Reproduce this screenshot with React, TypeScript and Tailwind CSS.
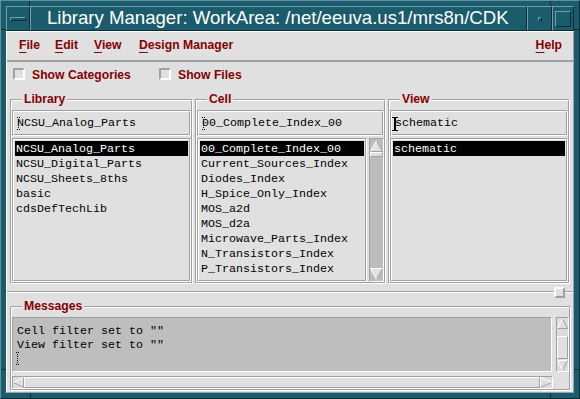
import React from "react";

const RAISED = "border-t-white border-l-white border-b-[#a0a0a0] border-r-[#a0a0a0]";
const SUNKEN = "border-t-[#a0a0a0] border-l-[#a0a0a0] border-b-white border-r-white";
const TRAISED = "border-t-[#6f9fac] border-l-[#6f9fac] border-b-[#0a2e38] border-r-[#0a2e38]";

type Dir = "up" | "down" | "left" | "right";

function Arrow({ dir, w, h }: { dir: Dir; w: number; h: number }) {
  const W = w - 0.5;
  const H = h - 0.5;
  let pts = "";
  let light = "";
  let dark = "";
  if (dir === "up") {
    pts = `${w / 2},0.5 ${W},${H} 0.5,${H}`;
    dark = `${w / 2},0.5 ${W},${H} 0.5,${H}`;
    light = `0.5,${H} ${w / 2},0.5`;
  } else if (dir === "down") {
    pts = `0.5,0.5 ${W},0.5 ${w / 2},${H}`;
    dark = `${W},0.5 ${w / 2},${H}`;
    light = `${w / 2},${H} 0.5,0.5 ${W},0.5`;
  } else if (dir === "left") {
    pts = `0.5,${h / 2} ${W},0.5 ${W},${H}`;
    dark = `${W},0.5 ${W},${H} 0.5,${h / 2}`;
    light = `0.5,${h / 2} ${W},0.5`;
  } else {
    pts = `0.5,0.5 ${W},${h / 2} 0.5,${H}`;
    dark = `${W},${h / 2} 0.5,${H}`;
    light = `0.5,${H} 0.5,0.5 ${W},${h / 2}`;
  }
  return (
    <svg width={w} height={h} className="block shrink-0">
      <polygon points={pts} fill="#e0e0e0" />
      <polyline points={dark} fill="none" stroke="#a0a0a0" />
      <polyline points={light} fill="none" stroke="#ffffff" />
    </svg>
  );
}

function DottedBeam() {
  const dots = [];
  for (let y = 2; y < 12; y += 2) dots.push(<rect key={y} x={2} y={y} width={1} height={1} fill="#000" />);
  return (
    <svg width={5} height={13} className="block">
      <rect x={1} y={0} width={1} height={1} fill="#000" />
      <rect x={3} y={0} width={1} height={1} fill="#000" />
      {dots}
      <rect x={1} y={12} width={1} height={1} fill="#000" />
      <rect x={3} y={12} width={1} height={1} fill="#000" />
    </svg>
  );
}

function SolidBeam() {
  return (
    <svg width={6} height={14} className="block">
      <rect x={0} y={0} width={6} height={1} fill="#000" />
      <rect x={2} y={0} width={2} height={14} fill="#000" />
      <rect x={0} y={13} width={6} height={1} fill="#000" />
    </svg>
  );
}

function Group({ label, className, children }: { label: string; className: string; children: React.ReactNode }) {
  return (
    <div className={`relative border ${SUNKEN} ${className}`}>
      <div className={`border ${RAISED} h-full flex flex-col`}>{children}</div>
      <div className="absolute -top-[8px] left-[11px] px-[2px] bg-[#e0e0e0] text-[#850000] font-bold text-[12.2px] leading-[14px]">
        {label}
      </div>
    </div>
  );
}

function Field({ text, cursor }: { text: string; cursor: "dot" | "solid" }) {
  return (
    <div className={`relative h-[26px] shrink-0 border ${SUNKEN}`}>
      <div className={`h-full border ${RAISED} flex items-center pt-[2px] pl-[3px] whitespace-nowrap text-black text-[11.67px] [font-family:'Liberation_Mono',monospace]`}>
        {text}
      </div>
      <div className={`absolute ${cursor === "solid" ? "left-[1px] top-[6px]" : "left-[3px] top-[6px]"}`}>
        {cursor === "solid" ? <SolidBeam /> : <DottedBeam />}
      </div>
    </div>
  );
}

function ListBox({ items, className }: { items: string[]; className: string }) {
  return (
    <div className={`border ${SUNKEN} ${className}`}>
      <div className={`h-full border ${RAISED} pt-[1px] overflow-hidden text-[11.67px] leading-[15px] [font-family:'Liberation_Mono',monospace]`}>
        {items.map((it, i) => (
          <div
            key={it}
            className={`h-[15px] mx-[1px] pl-[1px] pt-[1px] leading-[14px] whitespace-nowrap ${i === 0 ? "bg-black text-white" : "text-black"}`}
          >
            {it}
          </div>
        ))}
      </div>
    </div>
  );
}

function Check({ label, className }: { label: string; className: string }) {
  return (
    <div className={`flex items-center ${className}`}>
      <div className={`w-[12px] h-[12px] border-2 ${SUNKEN} bg-[#e0e0e0]`} />
      <span className="ml-[7px] pt-[1px] text-[#850000] font-bold text-[12.2px] leading-[14px] whitespace-nowrap">{label}</span>
    </div>
  );
}

function MenuItem({ label, className }: { label: string; className: string }) {
  return (
    <div className={`text-[#850000] font-bold text-[12.2px] leading-[14px] whitespace-nowrap ${className}`}>
      <span className="underline underline-offset-[3px]">{label[0]}</span>
      {label.slice(1)}
    </div>
  );
}

function Mark({ className }: { className: string }) {
  return <div className={`absolute bg-[#0a2e38] ${className}`} />;
}

export default function App() {
  return (
    <div
      className={`relative w-[580px] h-[399px] overflow-hidden bg-[#1b5c6c] border border-t-[#5e909e] border-l-[#5e909e] border-b-[#0a2e38] border-r-[#0a2e38] p-[5px] flex flex-col [font-family:'Liberation_Sans',Arial,sans-serif]`}
    >
      {/* frame resize marks */}
      <Mark className="left-[28px] top-0 w-[1px] h-[5px]" />
      <Mark className="left-0 top-[28px] w-[5px] h-[1px]" />
      <Mark className="left-[549px] top-0 w-[1px] h-[5px]" />
      <Mark className="right-0 top-[28px] w-[5px] h-[1px]" />
      <Mark className="left-[29px] bottom-0 w-[1px] h-[5px]" />
      <Mark className="left-0 top-[368px] w-[5px] h-[1px]" />
      <Mark className="left-[549px] bottom-0 w-[1px] h-[5px]" />
      <Mark className="right-0 top-[368px] w-[5px] h-[1px]" />

      {/* title bar */}
      <div className="h-[25px] flex shrink-0">
        <div className={`w-[24px] border ${TRAISED} flex items-center pl-[3px]`}>
          <div className={`w-[16px] h-[4px] border ${TRAISED}`} />
        </div>
        <div
          className={`flex-1 border ${TRAISED} flex items-center pl-[16px] text-white text-[18.6px] leading-none whitespace-nowrap overflow-hidden`}
        >
          Library Manager: WorkArea: /net/eeuva.us1/mrs8n/CDK
        </div>
        <div className={`w-[25px] border ${TRAISED} flex items-center justify-center`}>
          <div className={`w-[4px] h-[4px] border ${TRAISED}`} />
        </div>
        <div className={`w-[22px] border ${TRAISED} flex items-center justify-center`}>
          <div className={`w-[16px] h-[16px] border ${TRAISED}`} />
        </div>
      </div>

      {/* client area */}
      <div className={`flex-1 bg-[#e0e0e0] border ${RAISED} flex flex-col`}>
        {/* menubar */}
        <div className="h-[30px] shrink-0 border-b-2 border-b-[#a0a0a0] flex items-center pb-[2px]">
          <MenuItem label="File" className="ml-[12px] w-[36px]" />
          <MenuItem label="Edit" className="w-[39px]" />
          <MenuItem label="View" className="w-[45px]" />
          <MenuItem label="Design Manager" className="" />
          <MenuItem label="Help" className="ml-auto mr-[11px]" />
        </div>

        {/* toggles */}
        <div className="mt-[6px] h-[12px] flex items-center shrink-0">
          <Check label="Show Categories" className="ml-[6px] w-[146px]" />
          <Check label="Show Files" className="" />
        </div>

        {/* Library / Cell / View */}
        <div className="mt-[19px] ml-[3px] h-[185px] flex gap-[2px] shrink-0">
          <Group label="Library" className="w-[183px]">
            <div className="pt-[9px]" />
            <Field text="NCSU_Analog_Parts" cursor="dot" />
            <ListBox
              className="mt-[2px] h-[144px]"
              items={["NCSU_Analog_Parts", "NCSU_Digital_Parts", "NCSU_Sheets_8ths", "basic", "cdsDefTechLib"]}
            />
          </Group>
          <Group label="Cell" className="w-[191px]">
            <div className="pt-[9px]" />
            <Field text="00_Complete_Index_00" cursor="dot" />
            <div className="mt-[2px] h-[144px] flex gap-[2px]">
              <ListBox
                className="flex-1 h-full"
                items={[
                  "00_Complete_Index_00",
                  "Current_Sources_Index",
                  "Diodes_Index",
                  "H_Spice_Only_Index",
                  "MOS_a2d",
                  "MOS_d2a",
                  "Microwave_Parts_Index",
                  "N_Transistors_Index",
                  "P_Transistors_Index",
                ]}
              />
              <div className={`w-[15px] h-full border ${SUNKEN} bg-[#bcbcbc] flex flex-col pt-[1px] pb-[1px]`}>
                <Arrow dir="up" w={13} h={12} />
                <div className={`h-[5px] border ${RAISED} bg-[#e0e0e0]`} />
                <div className="flex-1" />
                <Arrow dir="down" w={13} h={12} />
              </div>
            </div>
          </Group>
          <Group label="View" className="w-[182px]">
            <div className="pt-[9px]" />
            <Field text="schematic" cursor="solid" />
            <ListBox className="mt-[2px] h-[144px]" items={["schematic"]} />
          </Group>
        </div>

        {/* pane separator */}
        <div className="relative mt-[7px] h-[2px] shrink-0 border-t border-t-[#a0a0a0] border-b border-b-white">
          <div className={`absolute right-[8px] -top-[5px] w-[11px] h-[11px] border-2 ${RAISED} bg-[#e0e0e0]`} />
        </div>

        {/* Messages */}
        <Group label="Messages" className="mt-[13px] ml-[3px] w-[561px] h-[85px] shrink-0">
          <div className="pt-[9px]" />
          <div className="h-[55px] flex">
            <div
              className={`relative flex-1 border ${SUNKEN} bg-[#bebebe] pt-[6px] pl-[4px] text-black text-[11.67px] leading-[14px] whitespace-pre [font-family:'Liberation_Mono',monospace]`}
            >
              <div>Cell filter set to ""</div>
              <div>View filter set to ""</div>
              <div className="absolute left-[2px] top-[34px]">
                <DottedBeam />
              </div>
            </div>
            <div className={`ml-[4px] w-[13px] border ${SUNKEN} bg-[#dcdcdc] flex flex-col`}>
              <Arrow dir="up" w={11} h={11} />
              <div className="h-[7px]" />
              <div className={`h-[23px] border ${RAISED} bg-[#e0e0e0]`} />
              <div className="flex-1" />
              <Arrow dir="down" w={11} h={11} />
            </div>
          </div>
          <div className={`mt-[4px] h-[13px] w-[541px] border ${SUNKEN} bg-[#dcdcdc] flex`}>
            <Arrow dir="left" w={11} h={11} />
            <div className={`flex-1 border ${RAISED} bg-[#e0e0e0]`} />
            <Arrow dir="right" w={12} h={11} />
          </div>
        </Group>
      </div>
    </div>
  );
}
